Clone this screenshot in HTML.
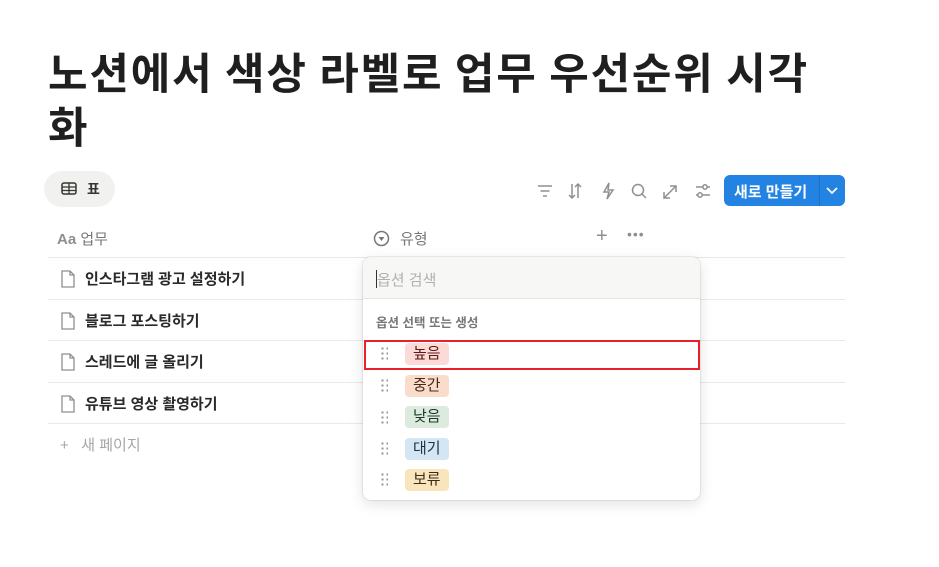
<!DOCTYPE html>
<html><head><meta charset="utf-8"><style>
*{margin:0;padding:0;box-sizing:border-box}
body{width:939px;height:567px;background:#fff;font-family:"Liberation Sans","Noto Sans CJK KR",sans-serif;color:#37352f;position:relative;overflow:hidden}
.abs{position:absolute}
h1{position:absolute;left:48px;top:44px;font-size:43px;line-height:54px;font-weight:700;color:#1f1f1f;width:840px;letter-spacing:1.8px;font-family:"Noto Sans CJK KR",sans-serif}
.tab{left:44px;top:171px;width:71px;height:36px;border-radius:18px;background:#f1f1ef;font-size:14px;font-weight:700}
.line{position:absolute;left:48px;width:797px;height:1px;background:#e9e9e7}
.row{position:absolute;left:60px;font-size:15px;font-weight:700;color:#2a2a2a;display:flex;align-items:center;gap:9px}
.pop{left:363px;top:257px;width:337px;height:243px;background:#fff;border-radius:8px;box-shadow:0 0 0 1px rgba(15,15,15,.07),0 4px 14px rgba(15,15,15,.12)}
.tag{position:absolute;left:42px;height:22px;padding:0 8px;border-radius:4px;font-size:15px;line-height:22px}
.dots{position:absolute;left:17px;width:8px;height:14px;background-image:radial-gradient(circle,#999 1.1px,transparent 1.3px);background-size:5px 5px}
.ic{stroke:#8f8f8c;fill:none;stroke-width:1.5}
</style></head><body>
<h1>노션에서 색상 라벨로 업무 우선순위 시각<br>화</h1>
<div class="abs tab"><svg class="abs" style="left:17px;top:11px" width="16" height="13"><rect x="1" y="1" width="14" height="11" rx="2" fill="none" stroke="#37352f" stroke-width="1.5"/><path d="M1 5h14M1 8.5h14M8 1v11" stroke="#37352f" stroke-width="1.3"/></svg><span class="abs" style="left:43px;top:8px">표</span></div>
<svg class="abs" style="left:536px;top:182px" width="180" height="18">
<path class="ic" d="M2 4h14M4.5 9h9M7 14h4"/>
<path class="ic" d="M36 2v14M33 13l3 3 3-3M42 16V2M39 5l3-3 3 3"/>
<path class="ic" d="M73 1l-5 9h5l-2 7 6-9h-5z"/>
<circle class="ic" cx="102" cy="8" r="5.5"/><path class="ic" d="M106 12l4 4"/>
<path class="ic" d="M128 16l12-12M134 4h6v6M128 10v6h6"/>
<path class="ic" d="M160 5h14M160 13h14"/><circle cx="169" cy="5" r="2.2" fill="#fff" stroke="#8f8f8c" stroke-width="1.5"/><circle cx="164" cy="13" r="2.2" fill="#fff" stroke="#8f8f8c" stroke-width="1.5"/>
</svg>
<div class="abs" style="left:724px;top:175px;width:121px;height:31px;background:#2383e2;border-radius:6px;color:#fff;font-weight:700;font-size:15px">
<span class="abs" style="left:10px;top:6px">새로 만들기</span>
<div class="abs" style="left:95px;top:0;width:1px;height:31px;background:rgba(0,0,0,.15)"></div>
<svg class="abs" style="left:102px;top:11px" width="12" height="9"><path d="M1 2l5 5 5-5" stroke="#fff" stroke-width="1.8" fill="none"/></svg></div>
<div class="abs" style="left:57px;top:228px;font-size:15px;color:#787774"><b style="color:#8f8f8c">Aa</b> 업무</div>
<svg class="abs" style="left:373px;top:230px" width="17" height="17"><circle cx="8.5" cy="8.5" r="7" fill="none" stroke="#787774" stroke-width="1.5"/><path d="M5.5 7h6l-3 4z" fill="#787774"/></svg>
<div class="abs" style="left:400px;top:228px;font-size:15px;color:#787774">유형</div>
<div class="abs" style="left:596px;top:225px;font-size:20px;color:#8f8f8c">+</div>
<div class="abs" style="left:627px;top:226px;font-size:14px;color:#8f8f8c;letter-spacing:1px">•••</div>
<div class="line" style="top:257px"></div><div class="line" style="top:299px"></div><div class="line" style="top:340px"></div><div class="line" style="top:382px"></div><div class="line" style="top:423px"></div>
<div class="row" style="top:268px"><svg width="16" height="18"><path d="M2 1h8l4 4v12H2z M10 1v4h4" fill="none" stroke="#8f8f8c" stroke-width="1.3"/></svg>인스타그램 광고 설정하기</div>
<div class="row" style="top:310px"><svg width="16" height="18"><path d="M2 1h8l4 4v12H2z M10 1v4h4" fill="none" stroke="#8f8f8c" stroke-width="1.3"/></svg>블로그 포스팅하기</div>
<div class="row" style="top:351px"><svg width="16" height="18"><path d="M2 1h8l4 4v12H2z M10 1v4h4" fill="none" stroke="#8f8f8c" stroke-width="1.3"/></svg>스레드에 글 올리기</div>
<div class="row" style="top:393px"><svg width="16" height="18"><path d="M2 1h8l4 4v12H2z M10 1v4h4" fill="none" stroke="#8f8f8c" stroke-width="1.3"/></svg>유튜브 영상 촬영하기</div>
<div class="abs" style="left:60px;top:434px;font-size:15px;color:#a5a5a2">+&nbsp;&nbsp; 새 페이지</div>
<div class="abs pop">
<div class="abs" style="left:0;top:0;width:337px;height:42px;background:#f7f7f5;border-radius:8px 8px 0 0;border-bottom:1px solid #e5e5e3"></div>
<div class="abs" style="left:13px;top:13px;width:1px;height:18px;background:#333"></div>
<div class="abs" style="left:14px;top:12px;font-size:15px;color:#b0b0ad">옵션 검색</div>
<div class="abs" style="left:13px;top:55px;font-size:12.5px;font-weight:700;color:#787774">옵션 선택 또는 생성</div>
<div class="abs" style="left:1px;top:83px;width:336px;height:30px;border:2.5px solid #e8202a"></div>
<div class="dots" style="top:89px"></div><div class="tag" style="top:86px;background:#fbdad7;color:#5d1715">높음</div>
<div class="dots" style="top:121px"></div><div class="tag" style="top:118px;background:#f9dccb;color:#4a2a16">중간</div>
<div class="dots" style="top:153px"></div><div class="tag" style="top:149px;background:#dcebdd;color:#1c3829">낮음</div>
<div class="dots" style="top:184px"></div><div class="tag" style="top:181px;background:#d4e6f3;color:#183347">대기</div>
<div class="dots" style="top:215px"></div><div class="tag" style="top:212px;background:#f9e4bc;color:#402c1b">보류</div>
</div>
</body></html>
